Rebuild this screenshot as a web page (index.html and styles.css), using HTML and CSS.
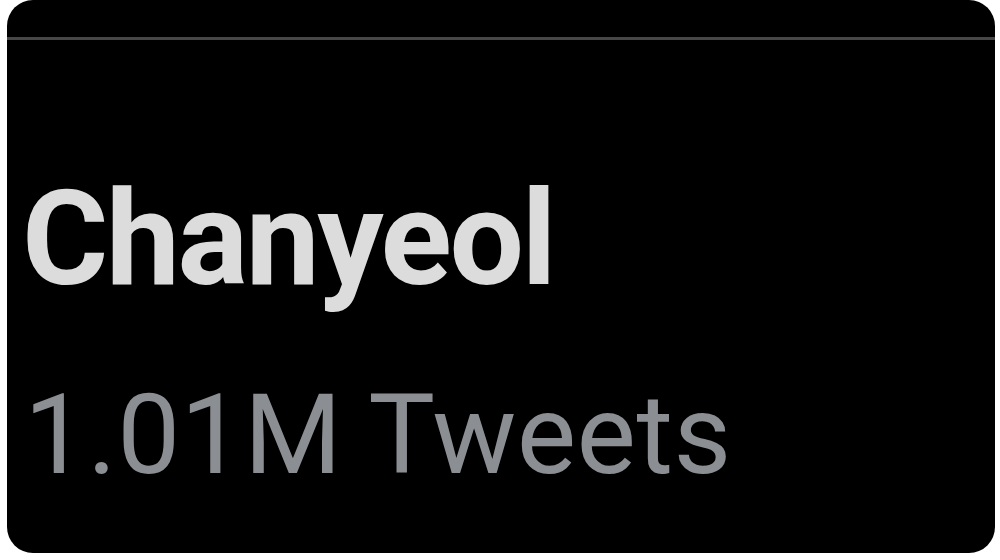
FILE: index.html
```html
<!DOCTYPE html>
<html lang="en">
<head>
  <meta charset="UTF-8" />
  <title>Chanyeol</title>
  <link rel="stylesheet" href="styles.css">
</head>
<body>
  <div class="card">
    <div class="card-top"></div>
    <div class="trend">
      <div class="trend-name">Chanyeol</div>
      <div class="trend-count">1.01M Tweets</div>
    </div>
  </div>
</body>
</html>
```

FILE: styles.css
```css
html, body {
  margin: 0;
  padding: 0;
  background: #fff;
  height: 100%;
}

body {
  padding: 0 5px 7px 7px;
  box-sizing: border-box;
}

.card {
  background: #000;
  height: 100%;
  border-radius: 26px;
  overflow: hidden;
  font-family: Roboto, 'Liberation Sans', sans-serif;
  display: flex;
  flex-direction: column;
}

.card-top {
  height: 37px;
  border-bottom: 3px solid #474747;
}

.trend {
  padding: 0 0 0 15px;
}

.trend-name {
  margin-top: 133px;
  font-size: 132px;
  font-weight: 700;
  color: #dcdcdc;
  line-height: 1;
  letter-spacing: -2.4px;
}

.trend-count {
  margin: 74px 0 0 2px;
  font-size: 112px;
  color: #8b8e92;
  line-height: 1;
  letter-spacing: 0.4px;
}
```
